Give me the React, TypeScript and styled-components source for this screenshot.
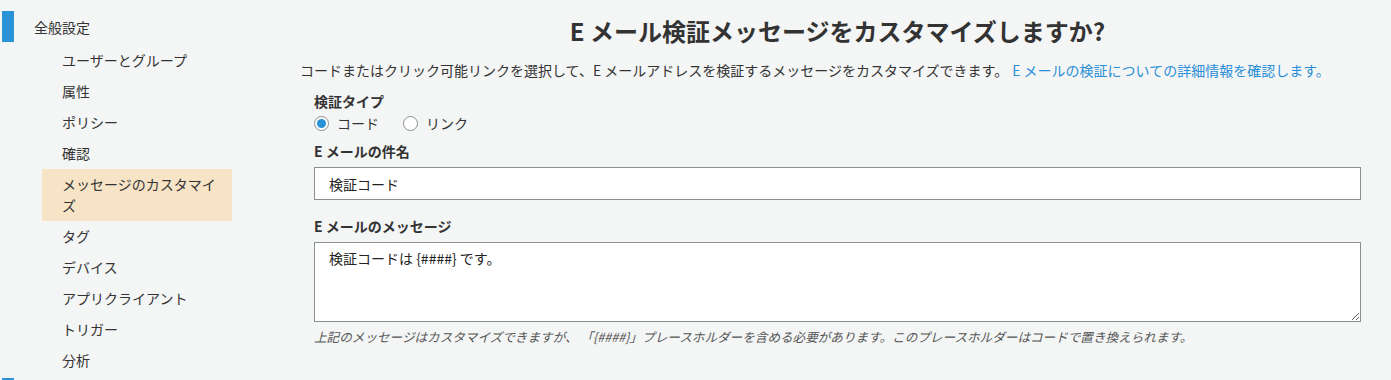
import React from "react";
import styled, { createGlobalStyle } from "styled-components";

const GlobalStyle = createGlobalStyle`
  html, body {
    margin: 0;
    padding: 0;
    background: #f4f5f5;
  }
  body {
    font-family: "Noto Sans CJK JP", "Noto Sans", "Liberation Sans", sans-serif;
    color: #333;
    font-size: 14px;
  }
  * { box-sizing: border-box; }
`;

const Page = styled.div`
  display: flex;
  align-items: flex-start;
  width: 1391px;
`;

const Sidebar = styled.nav`
  width: 300px;
  flex: none;
  padding-top: 11px;
`;

const Section = styled.div`
  display: flex;
  flex-direction: column;
  margin-bottom: 2px;
`;

const SectionHeader = styled.div`
  display: flex;
  align-items: center;
  height: 31px;
  gap: 20px;
  padding-left: 2px;
  font-size: 14px;
  line-height: 20px;
  color: #333;
  &::before {
    content: "";
    display: block;
    width: 12px;
    height: 31px;
    background: #2a93d8;
  }
`;

const NavList = styled.ul`
  list-style: none;
  margin: 3px 0 0 42px;
  padding: 0;
  width: 190px;
`;

const NavItem = styled.li<{ $active?: boolean }>`
  padding: 5px 12px 5px 20px;
  line-height: 21px;
  font-size: 14px;
  color: #333;
  background: ${(p) => (p.$active ? "#f7e3c6" : "transparent")};
`;

const Main = styled.main`
  flex: 1;
  padding: 15px 16px 0 0;
`;

const Title = styled.h1`
  margin: 0;
  text-align: center;
  font-size: 24px;
  line-height: 32px;
  font-weight: 700;
  color: #333;
`;

const Description = styled.p`
  margin: 12px 0 0;
  font-size: 14px;
  line-height: 22px;
  color: #333;
`;

const Link = styled.a`
  color: #2a8fd8;
  text-decoration: none;
  margin-left: 4px;
`;

const Form = styled.div`
  padding: 0 14px;
  display: flex;
  flex-direction: column;
`;

const Label = styled.div<{ $top: number }>`
  margin-top: ${(p) => p.$top}px;
  font-size: 14px;
  line-height: 20px;
  font-weight: 700;
  color: #333;
`;

const RadioRow = styled.div`
  display: flex;
  align-items: center;
  gap: 24px;
  margin-top: 2px;
  height: 20px;
`;

const RadioLabel = styled.label`
  display: flex;
  align-items: center;
  gap: 8px;
  font-size: 14px;
  line-height: 20px;
  color: #333;
`;

const RadioInput = styled.input`
  appearance: none;
  margin: 0;
  width: 15px;
  height: 15px;
  border-radius: 50%;
  border: 1px solid #8a8f8f;
  background: #fff;
  position: relative;
  &:checked::after {
    content: "";
    position: absolute;
    inset: 2px;
    border-radius: 50%;
    background: #2a93d8;
  }
`;

const TextInput = styled.input`
  margin-top: 6px;
  height: 33px;
  width: 100%;
  border: 1px solid #8a8f8f;
  background: #fff;
  padding: 0 14px;
  font-family: inherit;
  font-size: 14px;
  color: #222;
  outline: none;
`;

const TextArea = styled.textarea`
  margin-top: 6px;
  height: 80px;
  width: 100%;
  border: 1px solid #8a8f8f;
  background: #fff;
  padding: 5px 14px;
  font-family: inherit;
  font-size: 14px;
  line-height: 20px;
  color: #222;
  outline: none;
  resize: both;
  display: block;
`;

const Hint = styled.p`
  margin: 7px 0 0;
  font-size: 12.6px;
  line-height: 16px;
  font-style: italic;
  color: #555;
`;

const items = [
  "ユーザーとグループ",
  "属性",
  "ポリシー",
  "確認",
  "メッセージのカスタマイズ",
  "タグ",
  "デバイス",
  "アプリクライアント",
  "トリガー",
  "分析",
];

export default function App() {
  return (
    <>
      <GlobalStyle />
      <Page>
        <Sidebar>
          <Section>
            <SectionHeader>全般設定</SectionHeader>
            <NavList>
              {items.map((it) => (
                <NavItem key={it} $active={it === "メッセージのカスタマイズ"}>
                  {it}
                </NavItem>
              ))}
            </NavList>
          </Section>
          <Section>
            <SectionHeader />
          </Section>
        </Sidebar>
        <Main>
          <Title>E メール検証メッセージをカスタマイズしますか?</Title>
          <Description>
            コードまたはクリック可能リンクを選択して、E メールアドレスを検証するメッセージをカスタマイズできます。
            <Link href="#">E メールの検証についての詳細情報を確認します。</Link>
          </Description>
          <Form>
            <Label $top={10}>検証タイプ</Label>
            <RadioRow>
              <RadioLabel>
                <RadioInput type="radio" name="vt" defaultChecked />
                コード
              </RadioLabel>
              <RadioLabel>
                <RadioInput type="radio" name="vt" />
                リンク
              </RadioLabel>
            </RadioRow>
            <Label $top={8}>E メールの件名</Label>
            <TextInput defaultValue="検証コード" />
            <Label $top={16}>E メールのメッセージ</Label>
            <TextArea defaultValue="検証コードは {####} です。" />
            <Hint>
              上記のメッセージはカスタマイズできますが、 「{"{####}"}」プレースホルダーを含める必要があります。このプレースホルダーはコードで置き換えられます。
            </Hint>
          </Form>
        </Main>
      </Page>
    </>
  );
}
